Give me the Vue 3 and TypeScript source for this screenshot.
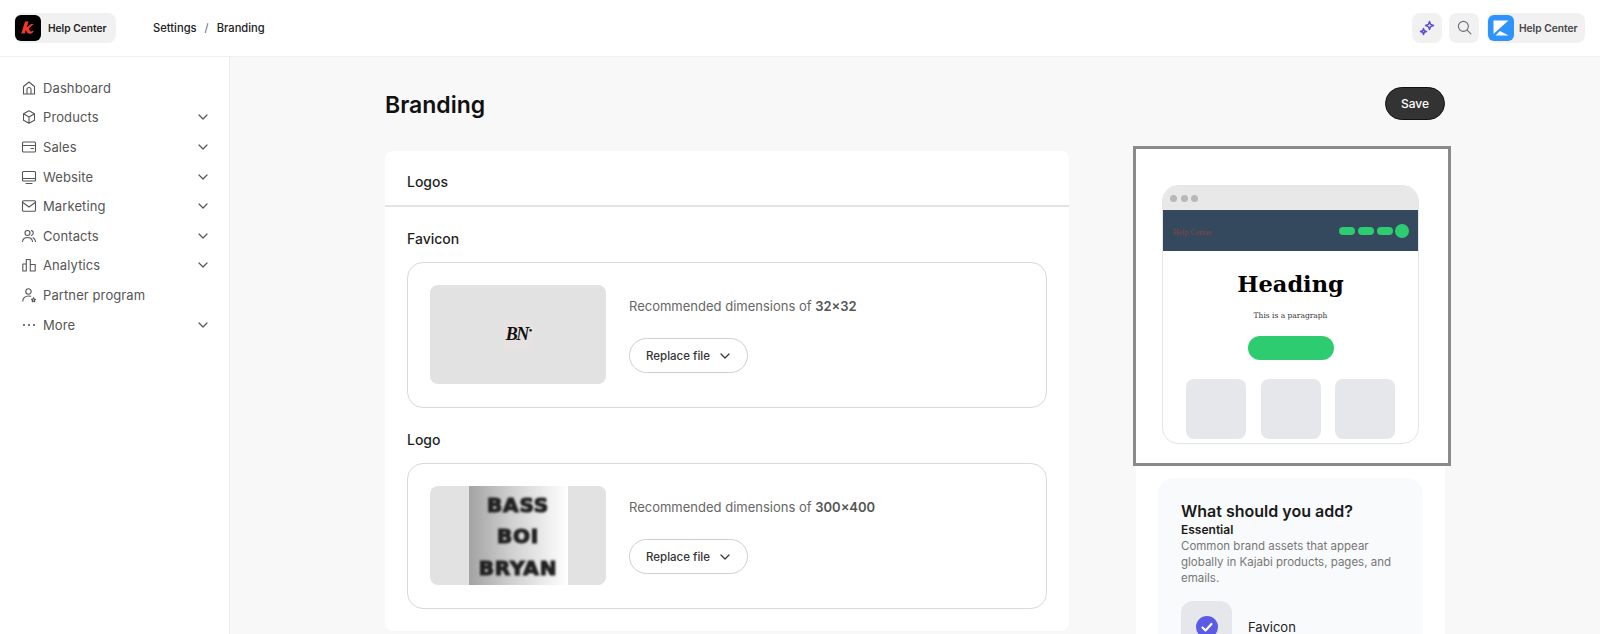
<template>
  <div class="app">
    <header class="topbar">
      <div class="pill site-pill">
        <span class="site-logo">
          <svg width="20" height="20" viewBox="0 0 20 20">
            <path d="M7 3.500h3.600L8.600 9.600 13.200 6h2.600l-5 4.600c.7 1.600 1.500 2.900 2.300 2.900.6 0 1.200-.4 1.900-1l.7.9c-1.200 1.400-2.500 2.400-3.900 2.400-2 0-3.200-1.800-4-3.800l-.9 3.500H3.300z" fill="#f0392b" />
          </svg>
        </span>
        <span>Help Center</span>
      </div>
      <nav class="crumbs">
        <span>Settings</span>
        <span class="slash">/</span>
        <span>Branding</span>
      </nav>
      <div class="top-actions">
        <button class="square-btn" aria-label="AI">
          <svg width="20" height="20" viewBox="0 0 20 20" fill="none" stroke="#5b4fe0" stroke-width="1.500" stroke-linejoin="round">
            <path d="M12.500 3.500l1.100 2.900 2.900 1.100-2.900 1.100-1.100 2.900-1.100-2.900-2.900-1.100 2.900-1.100z" />
            <path d="M6.500 10.500l.8 2.200 2.200.8-2.200.8-.8 2.200-.8-2.200-2.200-.8 2.200-.8z" />
          </svg>
        </button>
        <button class="square-btn" aria-label="Search">
          <svg width="17" height="17" viewBox="0 0 18 18" fill="none" stroke="#6b6f73" stroke-width="1.200" stroke-linecap="round">
            <circle cx="7.800" cy="7.800" r="5.300" />
            <path d="M11.800 11.800l4 4" />
          </svg>
        </button>
        <div class="pill account-pill">
          <span class="account-logo">
            <svg width="18" height="18" viewBox="0 0 18 18" fill="#fff">
              <path d="M1.500 1.500h15L7.800 9.300 1.500 15z" />
              <path d="M8 12l8.500 4.500H3.500z" />
            </svg>
          </span>
          <span>Help Center</span>
        </div>
      </div>
    </header>

    <div class="body">
      <aside class="sidebar">
        <a v-for="item in navItems" :key="item.label" class="nav-item">
          <svg class="nav-icon" width="16" height="16" viewBox="0 0 16 16" fill="none" stroke="currentColor" stroke-width="1.100" stroke-linecap="round" stroke-linejoin="round">
            <path :d="item.icon" />
          </svg>
          <span class="nav-label">{{ item.label }}</span>
          <svg v-if="item.chevron" width="12" height="12" viewBox="0 0 12 12" fill="none" stroke="currentColor" stroke-width="1.200" stroke-linecap="round" stroke-linejoin="round">
            <path d="M2 4l4 4 4-4" />
          </svg>
        </a>
      </aside>

      <main class="main">
        <div class="content">
          <div class="title-row">
            <h1>Branding</h1>
            <button class="save">Save</button>
          </div>
          <div class="columns">
            <section class="card">
              <h2 class="card-title">Logos</h2>
              <div class="card-body">
                <div v-for="asset in assets" :key="asset.name" class="asset">
                  <h3>{{ asset.name }}</h3>
                  <div class="asset-box">
                    <div class="thumb">
                      <div v-if="asset.name === 'Favicon'" class="favicon-img">BN<sup>●</sup></div>
                      <div v-else class="logo-img">
                        <span>BASS</span>
                        <span>BOI</span>
                        <span>BRYAN</span>
                      </div>
                    </div>
                    <div class="asset-info">
                      <p>Recommended dimensions of <strong>{{ asset.size }}</strong></p>
                      <button class="replace">
                        Replace file
                        <svg width="12" height="12" viewBox="0 0 12 12" fill="none" stroke="currentColor" stroke-width="1.200" stroke-linecap="round" stroke-linejoin="round">
                          <path d="M2 4l4 4 4-4" />
                        </svg>
                      </button>
                    </div>
                  </div>
                </div>
              </div>
            </section>

            <aside class="side">
              <div class="preview-frame">
                <div class="browser">
                  <div class="browser-bar">
                    <i></i><i></i><i></i>
                  </div>
                  <div class="site-nav">
                    <span class="site-name">Help Center</span>
                    <div class="site-links">
                      <i></i><i></i><i></i><b></b>
                    </div>
                  </div>
                  <div class="site-hero">
                    <div class="hero-heading">Heading</div>
                    <div class="hero-text">This is a paragraph</div>
                    <div class="hero-btn"></div>
                  </div>
                  <div class="tiles">
                    <i></i><i></i><i></i>
                  </div>
                </div>
              </div>
              <div class="tips">
                <h4>What should you add?</h4>
                <h5>Essential</h5>
                <p>Common brand assets that appear globally in Kajabi products, pages, and emails.</p>
                <div class="tip-row">
                  <div class="tip-tile">
                    <span class="check">
                      <svg width="14" height="14" viewBox="0 0 14 14" fill="none" stroke="#fff" stroke-width="2.200" stroke-linecap="round" stroke-linejoin="round">
                        <path d="M2.500 7.500l3 3 6-6.500" />
                      </svg>
                    </span>
                  </div>
                  <span>Favicon</span>
                </div>
              </div>
            </aside>
          </div>
        </div>
      </main>
    </div>
  </div>
</template>

<script setup lang="ts">
const navItems = [
  { label: "Dashboard", chevron: false, icon: "M2.500 6.500 8 2l5.500 4.500V14h-11zM6 14V9.500a2 2 0 0 1 4 0V14" },
  { label: "Products", chevron: true, icon: "M8 1.800l5.500 3v6.400L8 14.200l-5.500-3V4.800zM2.500 4.800 8 8l5.500-3.200M8 8v6.200" },
  { label: "Sales", chevron: true, icon: "M2.500 3h11a1 1 0 0 1 1 1v8a1 1 0 0 1-1 1h-11a1 1 0 0 1-1-1V4a1 1 0 0 1 1-1zM1.500 6.500h13M10 9.500h2.500" },
  { label: "Website", chevron: true, icon: "M2.500 2.500h11a1 1 0 0 1 1 1v7.500a1 1 0 0 1-1 1h-11a1 1 0 0 1-1-1V3.500a1 1 0 0 1 1-1zM1.500 9.500h13M5 14.500h6" },
  { label: "Marketing", chevron: true, icon: "M2.500 2.800h11a1 1 0 0 1 1 1v8.400a1 1 0 0 1-1 1h-11a1 1 0 0 1-1-1V3.800a1 1 0 0 1 1-1zM1.800 4.500 8 9l6.200-4.500" },
  { label: "Contacts", chevron: true, icon: "M6.500 2.500a2.500 2.500 0 1 1 0 5 2.500 2.500 0 0 1 0-5zM1.500 13.500c.4-2.600 2.400-4 5-4s4.600 1.400 5 4M10.500 2.600a2.500 2.500 0 0 1 0 4.800M12 9.800c1.400.6 2.300 2 2.500 3.700" },
  { label: "Analytics", chevron: true, icon: "M1.800 7h3.500v7H1.800zM5.300 14V2.500h4V14M9.300 7.500h4.900V14H9.300" },
  { label: "Partner program", chevron: false, icon: "M7.500 1.800a2.700 2.700 0 1 1 0 5.400 2.700 2.700 0 0 1 0-5.400zM1.800 14c0-3 2.400-5 5.700-5 .8 0 1.500.1 2.200.3M12.500 10.800l.6 1.300 1.400.2-1 1 .2 1.400-1.200-.7-1.200.7.200-1.400-1-1 1.400-.2z" },
  { label: "More", chevron: true, icon: "M3 7.500a.5.5 0 1 1 0 1 .5.5 0 1 1 0-1zM8 7.500a.5.5 0 1 1 0 1 .5.5 0 1 1 0-1zM13 7.500a.5.5 0 1 1 0 1 .5.5 0 1 1 0-1z" },
];

const assets = [
  { name: "Favicon", size: "32×32" },
  { name: "Logo", size: "300×400" },
];
</script>

<style>
html,
body {
  margin: 0;
  background: #f8f8f8;
}
</style>

<style scoped>
* {
  box-sizing: border-box;
}
.app {
  height: 634px;
  overflow: hidden;
  display: flex;
  flex-direction: column;
  font-family: Inter, "Liberation Sans", sans-serif;
  color: #1f1f1f;
}
.topbar {
  height: 57px;
  flex: none;
  display: flex;
  align-items: center;
  padding: 0 15px 1px 14px;
  background: #fff;
  border-bottom: 1px solid #f0f0f0;
}
.pill {
  height: 30px;
  display: flex;
  align-items: center;
  gap: 7px;
  border-radius: 8px;
  background: #f1f1f1;
  font-size: 10.200px;
  font-weight: 600;
  white-space: nowrap;
}
.site-pill {
  width: 102px;
  padding-left: 1px;
}
.site-logo,
.account-logo {
  width: 26px;
  height: 26px;
  flex: none;
  border-radius: 6px;
  display: flex;
  align-items: center;
  justify-content: center;
}
.site-logo {
  background: #000;
}
.account-logo {
  background: #2e93fa;
}
.crumbs {
  margin-left: 37px;
  display: flex;
  gap: 8px;
  font-size: 11.200px;
  font-weight: 500;
  color: #222;
}
.slash {
  color: #666;
  font-weight: 400;
}
.top-actions {
  margin-left: auto;
  display: flex;
  align-items: center;
  gap: 7px;
}
.square-btn {
  width: 30px;
  height: 30px;
  padding: 0;
  border: 0;
  border-radius: 8px;
  background: #f1f1f1;
  display: flex;
  align-items: center;
  justify-content: center;
}
.account-pill {
  width: 98px;
  padding-left: 1px;
  margin-left: 1px;
  gap: 5px;
  color: #444;
  font-size: 10.200px;
}
.body {
  flex: 1;
  min-height: 0;
  display: flex;
}
.sidebar {
  width: 230px;
  flex: none;
  padding: 16px 20px 0 21px;
  background: #fff;
  border-right: 1px solid #ececec;
}
.nav-item {
  height: 29.600px;
  display: flex;
  align-items: center;
  color: #555;
  font-size: 13px;
  letter-spacing: 0.1px;
}
.nav-icon {
  margin-right: 6px;
  flex: none;
}
.nav-label {
  flex: 1;
}
.main {
  flex: 1;
  min-width: 0;
  background: #f8f8f8;
}
.content {
  width: 1060px;
  margin: 0 auto;
}
.title-row {
  height: 94px;
  padding-top: 31px;
  display: flex;
  align-items: flex-start;
  justify-content: space-between;
}
h1 {
  margin: 0;
  font-size: 23px;
  line-height: 34px;
  font-weight: 600;
  color: #111;
}
.save {
  width: 60px;
  height: 33px;
  margin-top: -1px;
  border: 1px solid #111;
  border-radius: 17px;
  background: #333;
  color: #fff;
  font: 500 12px Inter, "Liberation Sans", sans-serif;
}
.columns {
  display: flex;
  gap: 67px;
  align-items: flex-start;
}
.card {
  width: 684px;
  flex: none;
  background: #fff;
  border-radius: 8px;
}
.card-title {
  margin: 0;
  height: 56px;
  padding: 6px 22px 0;
  display: flex;
  align-items: center;
  font-size: 14px;
  font-weight: 500;
  border-bottom: 2px solid #e4e4e4;
}
.card-body {
  padding: 22px 22px 22px;
}
.asset + .asset {
  margin-top: 22px;
}
h3 {
  margin: 0 0 13px;
  font-size: 14px;
  line-height: 20px;
  font-weight: 500;
}
.asset-box {
  height: 146px;
  padding: 22px 22px;
  display: flex;
  gap: 23px;
  border: 1px solid #d9d9d9;
  border-radius: 16px;
}
.thumb {
  width: 176px;
  height: 99px;
  flex: none;
  display: flex;
  justify-content: center;
  align-items: center;
  overflow: hidden;
  border-radius: 8px;
  background: #e2e2e2;
}
.favicon-img {
  width: 30px;
  height: 30px;
  margin-left: 2px;
  display: flex;
  align-items: center;
  justify-content: center;
  background: #e6e2e2;
  color: #111;
  font: italic 700 18px "Liberation Serif", serif;
  letter-spacing: -1.500px;
}
.favicon-img sup {
  font-size: 6px;
  margin: -10px 0 0 1px;
  letter-spacing: 0;
}
.logo-img {
  width: 99px;
  height: 99px;
  display: flex;
  flex-direction: column;
  align-items: center;
  justify-content: space-around;
  padding: 3px 0 1px;
  background: linear-gradient(90deg, #a3a3a3 0%, #d2d2d2 45%, #fff 100%);
  color: #222;
  font: 700 20px/1 "DejaVu Sans", sans-serif;
  letter-spacing: 0.800px;
}
.logo-img span {
  filter: blur(1px);
  -webkit-text-stroke: 1.200px #222;
}
.asset-info {
  flex: 1;
  display: flex;
  flex-direction: column;
  align-items: flex-start;
}
.asset-info p {
  margin: 12px 0 0;
  font-size: 13px;
  line-height: 18px;
  color: #666;
}
.asset-info strong {
  font-weight: 600;
  color: #555;
}
.replace {
  margin-top: 23px;
  width: 119px;
  height: 35px;
  display: flex;
  align-items: center;
  justify-content: center;
  gap: 9px;
  padding: 0;
  border: 1px solid #cfcfcf;
  border-radius: 18px;
  background: #fff;
  color: #333;
  font: 500 11.500px Inter, "Liberation Sans", sans-serif;
}
.side {
  width: 309px;
  flex: none;
  margin-top: -3px;
  background: #fff;
  height: 500px;
}
.preview-frame {
  height: 320px;
  margin: -2px -6px 0 -3px;
  padding: 36px 0 0 26px;
  border: 3px solid #8a8a8a;
  background: #fff;
}
.browser {
  width: 257px;
  height: 259px;
  border: 1px solid #e4e5e7;
  border-radius: 16px;
  overflow: hidden;
  background: #fff;
}
.browser-bar {
  height: 24px;
  display: flex;
  align-items: center;
  gap: 3.500px;
  padding-left: 7px;
  background: #e8e8e8;
}
.browser-bar i {
  width: 7px;
  height: 7px;
  border-radius: 50%;
  background: #b8b8b8;
}
.site-nav {
  height: 41px;
  display: flex;
  align-items: center;
  justify-content: space-between;
  padding: 0 9px 0 10px;
  background: #34495e;
}
.site-name {
  margin-top: 3px;
  font: 8px "Liberation Serif", serif;
  color: #85453a;
}
.site-links {
  display: flex;
  align-items: center;
  gap: 3px;
}
.site-links i {
  width: 16px;
  height: 8px;
  border-radius: 4px;
  background: #2ecc71;
}
.site-links b {
  width: 14px;
  height: 14px;
  margin-left: -1px;
  border-radius: 50%;
  background: #2ecc71;
}
.site-hero {
  display: flex;
  flex-direction: column;
  align-items: center;
}
.hero-heading {
  margin-top: 17px;
  font: 700 22.500px/32px "DejaVu Serif", serif;
  color: #000;
}
.hero-text {
  margin-top: 10px;
  font: 7.500px/12px "DejaVu Serif", serif;
  color: #333;
}
.hero-btn {
  margin-top: 14px;
  width: 86px;
  height: 24px;
  border-radius: 12px;
  background: #2ecc71;
}
.tiles {
  display: flex;
  justify-content: center;
  gap: 14.500px;
  margin-top: 19px;
}
.tiles i {
  width: 60px;
  height: 60px;
  border-radius: 8px;
  background: #e5e7eb;
}
.tips {
  margin: 12px 22px 0 22px;
  height: 200px;
  padding: 23px 23px 0;
  border-radius: 16px;
  background: #f9fafb;
}
h4 {
  margin: 0;
  font-size: 16px;
  line-height: 20px;
  font-weight: 600;
  color: #1a1a1a;
}
h5 {
  margin: 0;
  font-size: 12px;
  line-height: 17px;
  font-weight: 600;
  color: #1a1a1a;
}
.tips p {
  margin: 0;
  font-size: 11.500px;
  line-height: 16px;
  color: #777;
}
.tip-row {
  margin-top: 15px;
  display: flex;
  align-items: center;
  gap: 16px;
  font-size: 13px;
  color: #222;
}
.tip-tile {
  width: 51px;
  height: 51px;
  padding-top: 15px;
  display: flex;
  justify-content: center;
  align-items: flex-start;
  border-radius: 12px;
  background: #e5e7eb;
}
.check {
  width: 22px;
  height: 22px;
  display: flex;
  align-items: center;
  justify-content: center;
  border-radius: 50%;
  background: #5b5be6;
}
</style>
